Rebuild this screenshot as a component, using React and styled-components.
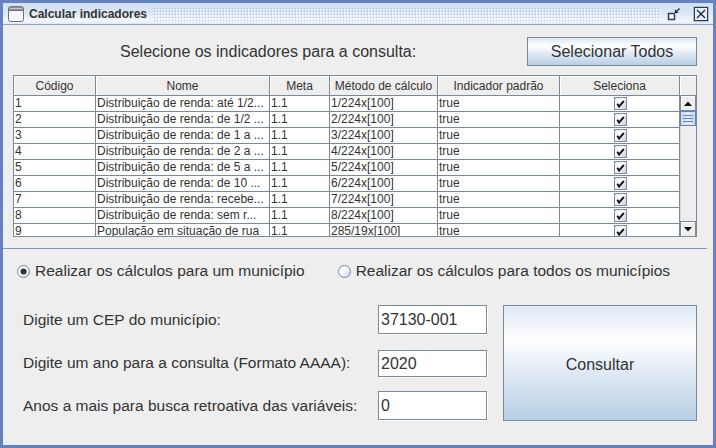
import React from "react";
import styled, { createGlobalStyle } from "styled-components";

const GlobalStyle = createGlobalStyle`
  html, body {
    margin: 0;
    padding: 0;
  }
  body {
    width: 716px;
    height: 448px;
    overflow: hidden;
    background: #6382bf;
    font-family: "Liberation Sans", Arial, sans-serif;
    color: #333333;
  }
`;

const Window = styled.div`
  width: 716px;
  height: 448px;
  box-sizing: border-box;
  border: 3px solid #6382bf;
  background: #eeeeee;
  display: flex;
  flex-direction: column;
`;

const TitleBar = styled.div`
  height: 21px;
  flex-shrink: 0;
  display: flex;
  align-items: center;
  border-bottom: 1px solid #8ea4cf;
  background: linear-gradient(#d2e0f1 0%, #dbe6f3 45%, #f4f8fc 85%, #dde8f3 100%);
`;

const TitleText = styled.span`
  font-size: 12px;
  font-weight: bold;
  color: #333333;
  margin-left: 5px;
  white-space: nowrap;
`;

const Bumps = styled.div`
  flex: 1;
  height: 14px;
  margin: 0 6px;
  background-image: radial-gradient(circle, #a3b8d9 0.7px, transparent 0.9px),
    radial-gradient(circle, #ffffff 0.7px, transparent 0.9px);
  background-size: 3px 3px, 3px 3px;
  background-position: 0 0, 1px 1px;
`;

const TitleButton = styled.div`
  width: ${(p) => p.size}px;
  height: ${(p) => p.size}px;
  margin-right: ${(p) => p.gap}px;
  display: flex;
`;

const Content = styled.div`
  flex: 1;
  display: flex;
  flex-direction: column;
`;

const TopRow = styled.div`
  display: flex;
  align-items: center;
  margin-top: 12px;
  padding: 0 16px 0 117px;
  height: 29px;
`;

const BigLabel = styled.span`
  font-size: 16px;
  color: #333333;
  white-space: nowrap;
`;

const OceanButton = styled.button`
  box-sizing: border-box;
  width: ${(p) => p.w}px;
  height: ${(p) => p.h}px;
  border: 1px solid #7a8a99;
  border-radius: 0;
  padding: ${(p) => (p.h > 60 ? "3px 0 0" : "0")};
  margin: 0;
  margin-left: ${(p) => (p.pushRight ? "auto" : "0")};
  font-family: "Liberation Sans", Arial, sans-serif;
  font-size: 16px;
  color: #333333;
  background: linear-gradient(
    #dde8f3 0%,
    #ffffff 30%,
    #dde8f3 60%,
    #b8cfe5 100%
  );
`;

const TableFrame = styled.div`
  margin: 9px 16px 0 10px;
  height: 162px;
  box-sizing: border-box;
  border: 1px solid #7a8a99;
  display: flex;
  background: #eeeeee;
`;

const TableMain = styled.div`
  width: 666px;
  display: flex;
  flex-direction: column;
  overflow: hidden;
`;

const columns = "82px 174px 60px 108px 122px 120px";

const HeaderRow = styled.div`
  display: grid;
  grid-template-columns: ${columns};
  height: 20px;
  flex-shrink: 0;
`;

const HeaderCell = styled.div`
  box-sizing: border-box;
  border-right: 1px solid #7a8a99;
  border-bottom: 1px solid #7a8a99;
  box-shadow: inset 1px 1px 0 #ffffff;
  background: #eeeeee;
  font-size: 12px;
  color: #333333;
  display: flex;
  align-items: center;
  justify-content: center;
  white-space: nowrap;
`;

const BodyRow = styled.div`
  display: grid;
  grid-template-columns: ${columns};
  height: 16px;
  flex-shrink: 0;
`;

const Cell = styled.div`
  box-sizing: border-box;
  border-right: 1px solid #7a8a99;
  border-bottom: 1px solid #7a8a99;
  background: #ffffff;
  font-size: 12px;
  line-height: 15px;
  color: #333333;
  padding-left: 1px;
  white-space: nowrap;
  overflow: hidden;
  display: flex;
  align-items: center;
  justify-content: ${(p) => (p.center ? "center" : "flex-start")};
`;

const ScrollColumn = styled.div`
  flex: 1;
  display: flex;
  flex-direction: column;
`;

const ScrollCorner = styled.div`
  height: 20px;
  box-sizing: border-box;
  border-bottom: 1px solid #7a8a99;
  box-shadow: inset 1px 1px 0 #ffffff;
  flex-shrink: 0;
`;

const ScrollTrack = styled.div`
  flex: 1;
  display: flex;
  flex-direction: column;
  background: #eeeeee;
`;

const ArrowButton = styled.div`
  height: 15px;
  box-sizing: border-box;
  border: 1px solid #7a8a99;
  border-top-width: ${(p) => (p.down ? "1px" : "0")};
  border-bottom-width: ${(p) => (p.down ? "0" : "1px")};
  box-shadow: inset 1px 1px 0 #ffffff;
  background: #eeeeee;
  display: flex;
  align-items: center;
  justify-content: center;
`;

const Thumb = styled.div`
  height: 15px;
  box-sizing: border-box;
  border: 1px solid #6382bf;
  background: linear-gradient(90deg, #c8d8ee, #e3ecf7 50%, #c8d8ee);
  display: flex;
  flex-direction: column;
  justify-content: center;
  gap: 2px;
  padding: 0 2px;
`;

const ThumbLine = styled.div`
  height: 1px;
  background: #6382bf;
`;

const TrackFill = styled.div`
  flex: 1;
  border-left: 1px solid #d0d8e0;
`;

const Separator = styled.div`
  height: 1px;
  margin: 11px 6px 0 0;
  background: #7f96c8;
`;

const RadioRow = styled.div`
  display: flex;
  align-items: center;
  gap: 33px;
  height: 20px;
  margin-top: 12px;
  padding-left: 14px;
`;

const RadioItem = styled.label`
  display: flex;
  align-items: center;
  gap: 5px;
  font-size: 15.5px;
  color: #333333;
  white-space: nowrap;
`;

const FormGrid = styled.div`
  display: grid;
  grid-template-columns: 339px 109px 194px;
  grid-template-rows: 29px 29px 29px;
  column-gap: 16px;
  row-gap: 14px;
  margin-top: 24px;
  padding-left: 20px;
`;

const FieldLabel = styled.span`
  grid-column: 1;
  grid-row: ${(p) => p.row};
  font-size: 15.5px;
  color: #333333;
  display: flex;
  align-items: center;
  white-space: nowrap;
`;

const TextField = styled.div`
  grid-column: 2;
  grid-row: ${(p) => p.row};
  margin-top: ${(p) => p.shift || 0}px;
  box-sizing: border-box;
  border: 1px solid #7a8a99;
  box-shadow: 1px 1px 0 #ffffff;
  background: #ffffff;
  font-size: 16px;
  color: #333333;
  padding-left: 2px;
  display: flex;
  align-items: center;
`;

const ConsultarWrap = styled.div`
  grid-column: 3;
  grid-row: 1 / span 3;
  display: flex;
`;

function WindowIcon() {
  return (
    <svg width="16" height="16" viewBox="0 0 16 16" style={{ marginLeft: 5 }}>
      <rect x="0.5" y="0.5" width="15" height="15" rx="2" fill="#f4f6f8" stroke="#6c737c" />
      <rect x="1" y="1" width="14" height="3.5" fill="#8d949e" />
      {[3, 5, 7, 9, 11, 13].map((x) => (
        <rect key={x} x={x - 0.5} y="2" width="1" height="1" fill="#ffffff" />
      ))}
      <line x1="1" y1="4.5" x2="15" y2="4.5" stroke="#6c737c" />
    </svg>
  );
}

function IconifyIcon() {
  return (
    <svg width="14" height="14" viewBox="0 0 14 14">
      <rect x="1.5" y="6.5" width="6" height="6" fill="#ffffff" stroke="#2d3b57" strokeWidth="1.5" />
      <path d="M12.5 1.5 L8.5 5.5 M8.5 2.8 L8.5 5.5 L11.2 5.5" stroke="#1e2535" strokeWidth="1.2" fill="none" />
    </svg>
  );
}

function CloseIcon() {
  return (
    <svg width="16" height="16" viewBox="0 0 16 16">
      <rect x="0.5" y="0.5" width="15" height="15" fill="#ffffff" stroke="#aebfdc" />
      <rect x="1.5" y="1.5" width="13" height="13" fill="#e8eef7" stroke="#2d3b57" />
      <path d="M4 4 L12 12 M12 4 L4 12" stroke="#1e2535" strokeWidth="1.3" />
    </svg>
  );
}

function CheckBox() {
  return (
    <svg width="13" height="13" viewBox="0 0 13 13">
      <defs>
        <linearGradient id="cbg" x1="0" y1="0" x2="1" y2="1">
          <stop offset="0" stopColor="#dde8f3" />
          <stop offset="0.4" stopColor="#ffffff" />
          <stop offset="1" stopColor="#b8cfe5" />
        </linearGradient>
      </defs>
      <rect x="0.5" y="0.5" width="12" height="12" fill="url(#cbg)" stroke="#7a8a99" />
      <path d="M3.3 6.8 L5 9.6 L9.8 4" stroke="#1a1a1a" strokeWidth="2" fill="none" />
    </svg>
  );
}

function Radio({ checked }) {
  return (
    <svg width="13" height="13" viewBox="0 0 13 13">
      <defs>
        <linearGradient id="rbg" x1="0" y1="0" x2="1" y2="1">
          <stop offset="0" stopColor="#dde8f3" />
          <stop offset="0.4" stopColor="#ffffff" />
          <stop offset="1" stopColor="#b8cfe5" />
        </linearGradient>
      </defs>
      <circle cx="6.5" cy="6.5" r="6" fill="url(#rbg)" stroke="#7a8a99" />
      {checked && <circle cx="6.5" cy="6.5" r="3" fill="#333333" />}
    </svg>
  );
}

function Triangle({ down }) {
  return (
    <svg width="8" height="5" viewBox="0 0 8 5">
      <path d={down ? "M0 0 L8 0 L4 4.5 Z" : "M0 5 L8 5 L4 0.5 Z"} fill="#111111" />
    </svg>
  );
}

const headers = ["Código", "Nome", "Meta", "Método de cálculo", "Indicador padrão", "Seleciona"];

const rows = [
  ["1", "Distribuição de renda: até 1/2...", "1.1", "1/224x[100]", "true"],
  ["2", "Distribuição de renda: de 1/2 ...", "1.1", "2/224x[100]", "true"],
  ["3", "Distribuição de renda: de 1 a ...", "1.1", "3/224x[100]", "true"],
  ["4", "Distribuição de renda: de 2 a ...", "1.1", "4/224x[100]", "true"],
  ["5", "Distribuição de renda: de 5 a ...", "1.1", "5/224x[100]", "true"],
  ["6", "Distribuição de renda: de 10 ...", "1.1", "6/224x[100]", "true"],
  ["7", "Distribuição de renda: recebe...", "1.1", "7/224x[100]", "true"],
  ["8", "Distribuição de renda: sem r...", "1.1", "8/224x[100]", "true"],
  ["9", "População em situação de rua", "1.1", "285/19x[100]", "true"],
];

export default function App() {
  return (
    <>
      <GlobalStyle />
      <Window>
        <TitleBar>
          <WindowIcon />
          <TitleText>Calcular indicadores</TitleText>
          <Bumps />
          <TitleButton size={14} gap={12}>
            <IconifyIcon />
          </TitleButton>
          <TitleButton size={16} gap={4}>
            <CloseIcon />
          </TitleButton>
        </TitleBar>

        <Content>
          <TopRow>
            <BigLabel>Selecione os indicadores para a consulta:</BigLabel>
            <OceanButton w={170} h={29} pushRight>
              Selecionar Todos
            </OceanButton>
          </TopRow>

          <TableFrame>
            <TableMain>
              <HeaderRow>
                {headers.map((h) => (
                  <HeaderCell key={h}>{h}</HeaderCell>
                ))}
              </HeaderRow>
              {rows.map((r) => (
                <BodyRow key={r[0]}>
                  {r.map((v, i) => (
                    <Cell key={i}>{v}</Cell>
                  ))}
                  <Cell center>
                    <CheckBox />
                  </Cell>
                </BodyRow>
              ))}
            </TableMain>
            <ScrollColumn>
              <ScrollCorner />
              <ScrollTrack>
                <ArrowButton>
                  <Triangle />
                </ArrowButton>
                <Thumb>
                  <ThumbLine />
                  <ThumbLine />
                  <ThumbLine />
                </Thumb>
                <TrackFill />
                <ArrowButton down>
                  <Triangle down />
                </ArrowButton>
              </ScrollTrack>
            </ScrollColumn>
          </TableFrame>

          <Separator />

          <RadioRow>
            <RadioItem>
              <Radio checked />
              Realizar os cálculos para um município
            </RadioItem>
            <RadioItem>
              <Radio />
              Realizar os cálculos para todos os municípios
            </RadioItem>
          </RadioRow>

          <FormGrid>
            <FieldLabel row={1}>Digite um CEP do município:</FieldLabel>
            <TextField row={1}>37130-001</TextField>
            <FieldLabel row={2}>Digite um ano para a consulta (Formato AAAA):</FieldLabel>
            <TextField row={2} shift={2}>2020</TextField>
            <FieldLabel row={3}>Anos a mais para busca retroativa das variáveis:</FieldLabel>
            <TextField row={3}>0</TextField>
            <ConsultarWrap>
              <OceanButton w={194} h={116}>
                Consultar
              </OceanButton>
            </ConsultarWrap>
          </FormGrid>
        </Content>
      </Window>
    </>
  );
}
